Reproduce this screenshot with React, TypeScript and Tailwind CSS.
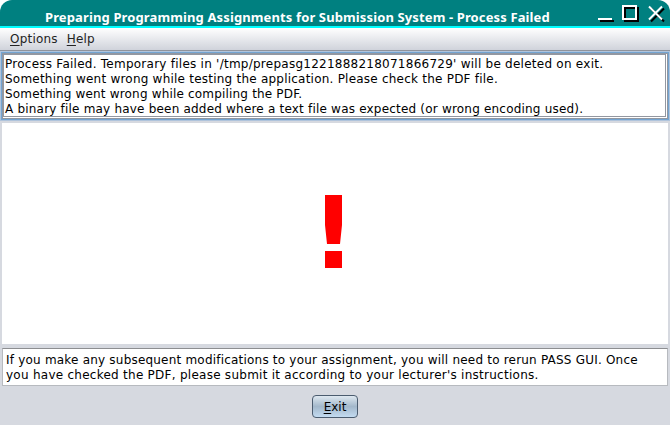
const report = [
  { text: "Process Failed. Temporary files in '/tmp/prepasg1221888218071866729' will be deleted on exit.", spacing: 'tracking-[0.25px]' },
  { text: 'Something went wrong while testing the application. Please check the PDF file.', spacing: 'tracking-[0.225px]' },
  { text: 'Something went wrong while compiling the PDF.', spacing: 'tracking-[0.18px]' },
  { text: 'A binary file may have been added where a text file was expected (or wrong encoding used).', spacing: 'tracking-[0.2px]' },
];

const advice = [
  { text: 'If you make any subsequent modifications to your assignment, you will need to rerun PASS GUI. Once', spacing: 'tracking-[0.205px]' },
  { text: "you have checked the PDF, please submit it according to your lecturer's instructions.", spacing: 'tracking-[0.26px]' },
];

function Lines({ lines }: { lines: { text: string; spacing: string }[] }) {
  return (
    <>
      {lines.map((line) => (
        <div key={line.text} className={`h-[15px] whitespace-pre leading-[15px] ${line.spacing}`}>
          {line.text}
        </div>
      ))}
    </>
  );
}

function WindowButtons() {
  const shapes = (
    <>
      <path d="M1 15h14" />
      <path d="M26 2h13v13H26z" />
      <path d="M52 2.5l13 13M65 2.5L52 15.5" />
    </>
  );
  return (
    <svg width="68" height="20" viewBox="0 0 68 20" fill="none" strokeWidth="2">
      <g stroke="#000" transform="translate(2 2)">{shapes}</g>
      <g stroke="#fff">{shapes}</g>
    </svg>
  );
}

export default function App() {
  return (
    <div className="flex h-[425px] w-[670px] flex-col overflow-hidden bg-white font-['DejaVu_Sans',sans-serif] text-[12px] text-black">
      <header className="flex h-7 shrink-0 items-start justify-between rounded-t-[12px] border-b-2 border-[#00ffff] bg-[#008080] pl-[45px] pr-[5px]">
        <h1 className="mt-2 whitespace-pre font-['Noto_Sans',sans-serif] text-[13px] font-bold leading-[18px] tracking-[0.125px] text-white">
          Preparing Programming Assignments for Submission System - Process Failed
        </h1>
        <div className="pt-1">
          <WindowButtons />
        </div>
      </header>
      <nav className="flex h-[23px] shrink-0 gap-[9px] border-b border-[#8f939c] bg-linear-to-b from-white to-[#d0d3db] pl-[10px] leading-[22px] tracking-[0.2px] text-[#232323]">
        <span><u className="underline-offset-2">O</u>ptions</span>
        <span><u className="underline-offset-2">H</u>elp</span>
      </nav>
      <main className="flex grow flex-col bg-[#d6d9e0]">
        <section className="h-[70px] border border-[#b0c4dc] bg-white">
          <div className="h-full border border-[#73a4d1]">
            <div className="h-full border border-[#9297a1] pr-px pb-px">
              <div className="h-full border border-[#9297a1] pl-px pt-[2px]">
                <Lines lines={report} />
              </div>
            </div>
          </div>
        </section>
        <section className="mx-[2px] mt-[2px] flex h-[221px] justify-center bg-white pt-[72px] pr-[2px]">
          <svg width="18" height="73" viewBox="0 0 18 73" fill="#f00">
            <path d="M0 0h17v30l-2 19H2L0 30zM0 56h17v17H0z" />
          </svg>
        </section>
        <section className="mx-[2px] mt-1 h-[38px] border border-[#b7babf] border-t-[#8d8e91] bg-white pt-1 pl-[3px]">
          <Lines lines={advice} />
        </section>
        <div className="flex justify-center pt-[9px]">
          <button className="h-[23px] w-[46px] rounded-[4px] border border-[#4b5c6f] bg-linear-to-b from-[#dfe8f0] via-[#a3b8cb] to-[#c3dbf1] pt-px leading-[20px]">
            <u className="underline-offset-2">E</u>xit
          </button>
        </div>
      </main>
    </div>
  );
}
